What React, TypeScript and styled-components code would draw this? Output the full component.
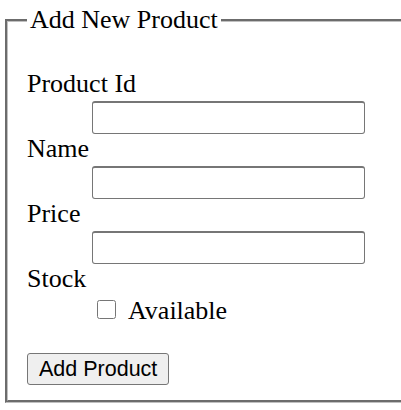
import React, { useState } from 'react';
import styled, { createGlobalStyle } from 'styled-components';

const GlobalStyle = createGlobalStyle`
  html, body {
    margin: 0;
    padding: 0;
    overflow: hidden;
    background: #fff;
  }
  body {
    font-family: "Liberation Serif", "Times New Roman", serif;
    font-size: 26px;
    color: #000;
  }
`;

const Page = styled.div`
  padding: 5px 0 0 5px;
`;

const FieldSet = styled.fieldset`
  box-sizing: border-box;
  width: 440px;
  margin: 0;
  padding: 34px 19px 15px;
  border: 3px groove rgb(192, 192, 192);
  min-inline-size: min-content;
`;

const Legend = styled.legend`
  padding: 0 3px;
  font-size: 26px;
  line-height: normal;
`;

const Field = styled.div`
  display: flex;
  flex-direction: column;
  align-items: flex-start;
`;

const Label = styled.label`
  display: block;
  line-height: normal;
`;

const TextInput = styled.input`
  box-sizing: border-box;
  width: 273px;
  height: 33px;
  margin: 2px 0 0 65px;
  padding: 0 4px;
  border: 1px solid #767676;
  border-top-width: 2px;
  border-radius: 3px;
  font-family: "Liberation Sans", Arial, sans-serif;
  font-size: 20px;
  background: #fff;
  outline: none;
`;

const CheckRow = styled.label`
  display: flex;
  align-items: flex-start;
  margin: 2px 0 0 70px;
  line-height: normal;
`;

const CheckBox = styled.input`
  width: 19px;
  height: 19px;
  margin: 4px 12px 0 0;
`;

const SubmitButton = styled.button`
  box-sizing: border-box;
  height: 32px;
  margin-top: 27px;
  padding: 0 11px;
  border: 1px solid #767676;
  border-radius: 3px;
  background: #efefef;
  color: #000;
  font-family: "Liberation Sans", Arial, sans-serif;
  font-size: 21.5px;
  cursor: pointer;
`;

function App() {
  const [product, setProduct] = useState({ id: '', name: '', price: '', available: false });

  return (
    <Page>
      <GlobalStyle />
      <form onSubmit={(e) => e.preventDefault()}>
        <FieldSet>
          <Legend>Add New Product</Legend>
          <Field>
            <Label htmlFor="pid">Product Id</Label>
            <TextInput
              id="pid"
              value={product.id}
              onChange={(e) => setProduct({ ...product, id: e.target.value })}
            />
          </Field>
          <Field>
            <Label htmlFor="pname">Name</Label>
            <TextInput
              id="pname"
              value={product.name}
              onChange={(e) => setProduct({ ...product, name: e.target.value })}
            />
          </Field>
          <Field>
            <Label htmlFor="pprice">Price</Label>
            <TextInput
              id="pprice"
              value={product.price}
              onChange={(e) => setProduct({ ...product, price: e.target.value })}
            />
          </Field>
          <Field>
            <Label as="div">Stock</Label>
            <CheckRow>
              <CheckBox
                type="checkbox"
                checked={product.available}
                onChange={(e) => setProduct({ ...product, available: e.target.checked })}
              />
              Available
            </CheckRow>
          </Field>
          <SubmitButton type="submit">Add Product</SubmitButton>
        </FieldSet>
      </form>
    </Page>
  );
}

export default App;
